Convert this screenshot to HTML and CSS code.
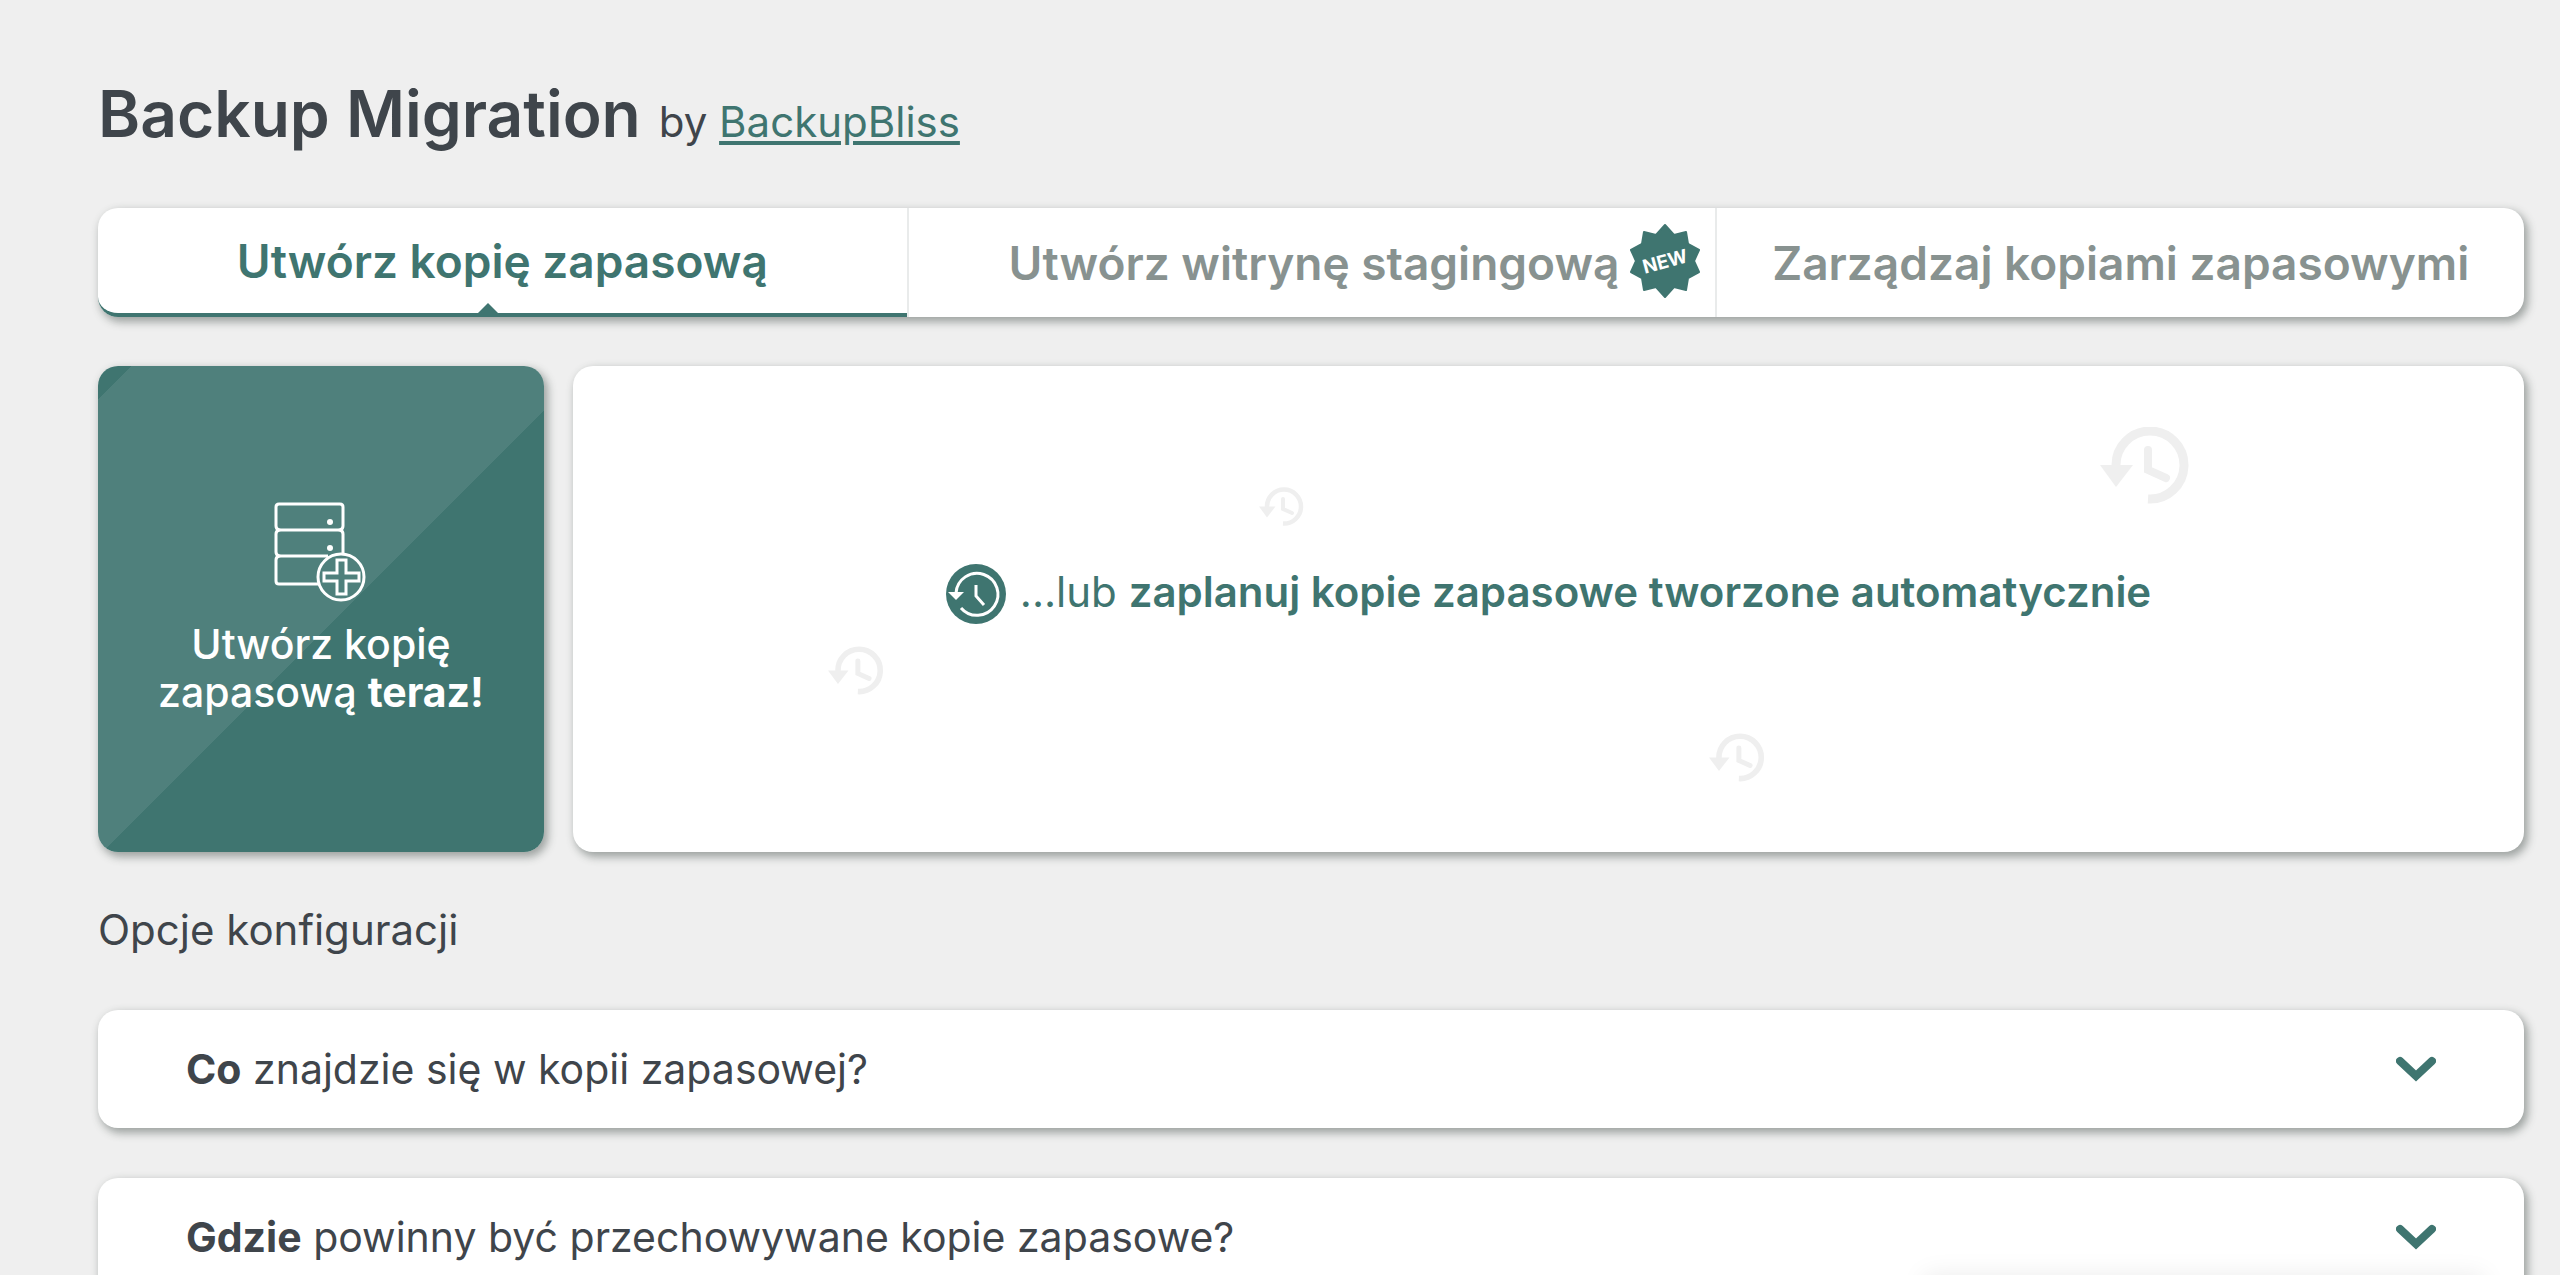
FILE: index.html
```html
<!DOCTYPE html>
<html lang="pl">
<head>
<meta charset="utf-8">
<meta name="viewport" content="width=device-width, initial-scale=1">
<title>Backup Migration</title>
<link rel="stylesheet" href="styles.css">
</head>
<body>
<svg class="sprite" aria-hidden="true">
  <symbol id="history" viewBox="0 0 90 78">
    <path d="M16 40V39A34 34 0 1 1 48 72" fill="none" stroke="currentColor" stroke-width="9"/>
    <path d="M0 38h33L16 60z" fill="currentColor"/>
    <path d="M48 23v20l18 8" fill="none" stroke="currentColor" stroke-width="8" stroke-linecap="round"/>
  </symbol>
  <symbol id="chevron" viewBox="0 0 40 28">
    <path d="M4 6l16 15L36 6" fill="none" stroke="currentColor" stroke-width="8" stroke-linecap="round"/>
  </symbol>
</svg>
<main class="page">
  <header class="header">
    <h1 class="title">Backup Migration</h1>
    <p class="byline">by <a href="#">BackupBliss</a></p>
  </header>

  <nav class="tabs card">
    <button class="tab tab-active" type="button">Utwórz kopię zapasową</button>
    <button class="tab tab-staging" type="button">Utwórz witrynę stagingową
      <svg class="badge" viewBox="0 0 72 74" aria-hidden="true">
        <path class="badge-shape" d="M36 1L45 11 57 8 59 20 70 26 65 37 70 48 59 54 57 66 45 63 36 73 27 63 15 66 13 54 2 48 7 37 2 26 13 20 15 8 27 11z"/>
        <text class="badge-text" x="36" y="44" text-anchor="middle" transform="rotate(-15 36 37)">NEW</text>
      </svg>
    </button>
    <button class="tab" type="button">Zarządzaj kopiami zapasowymi</button>
  </nav>

  <section class="actions">
    <button class="create card" type="button">
      <svg class="server" viewBox="0 0 94 102" fill="none" stroke="currentColor" stroke-width="3" aria-hidden="true">
        <path d="M69 51V32q0-3-3-4q3-1 3-4V5q0-3-3-3H5Q2 2 2 5v19q0 3 3 4q-3 1-3 4v18q0 3 3 4q-3 1-3 4v21q0 3 3 3h40"/>
        <path d="M5 28h61M5 54h49"/>
        <circle cx="56" cy="20" r="3" fill="currentColor" stroke="none"/>
        <circle cx="56" cy="46" r="3" fill="currentColor" stroke="none"/>
        <circle cx="67" cy="75" r="23"/>
        <path d="M63 58h9v13h13v8H72v13h-9V79H50v-8h13z"/>
      </svg>
      <span>Utwórz kopię<br>zapasową <b>teraz!</b></span>
    </button>
    <div class="schedule card">
      <svg class="deco deco-1" aria-hidden="true"><use href="#history"/></svg>
      <svg class="deco deco-2" aria-hidden="true"><use href="#history"/></svg>
      <svg class="deco deco-3" aria-hidden="true"><use href="#history"/></svg>
      <svg class="deco deco-4" aria-hidden="true"><use href="#history"/></svg>
      <button class="plan" type="button">
        <svg class="plan-icon" viewBox="0 0 60 60" fill="none" aria-hidden="true">
          <circle cx="30" cy="30" r="30" fill="currentColor"/>
          <path d="M10 29A21 21 0 1 1 15 44" stroke="#fff" stroke-width="3"/>
          <path d="M2 28h16l-8 8z" fill="#fff"/>
          <path d="M30 21v11l8 9" stroke="#fff" stroke-width="3"/>
        </svg>
        <span>...lub <b>zaplanuj kopie zapasowe tworzone automatycznie</b></span>
      </button>
    </div>
  </section>

  <h2 class="subtitle">Opcje konfiguracji</h2>
  <section class="options">
    <button class="option card" type="button">
      <span><b>Co</b> znajdzie się w kopii zapasowej?</span>
      <svg class="chevron" aria-hidden="true"><use href="#chevron"/></svg>
    </button>
    <button class="option card" type="button">
      <span><b>Gdzie</b> powinny być przechowywane kopie zapasowe?</span>
      <svg class="chevron" aria-hidden="true"><use href="#chevron"/></svg>
    </button>
  </section>
</main>
<aside class="drawer" aria-hidden="true"></aside>
</body>
</html>
```

FILE: styles.css
```css
:root {
  --green: #3f7570;
  --green-light: #4f807c;
  --ink: #3f454b;
  --muted: #889290;
}

* {
  box-sizing: border-box;
}

html {
  height: 100%;
  overflow: hidden;
}

body {
  margin: 0;
  height: 100%;
  overflow: hidden;
  background: #efefef;
  color: var(--ink);
  font-family: Inter, "Liberation Sans", sans-serif;
}

button {
  border: 0;
  padding: 0;
  background: none;
  color: inherit;
  font: inherit;
  cursor: pointer;
}

.sprite {
  display: none;
}

.page {
  padding: 78px 36px 0 98px;
}

.header {
  display: flex;
  align-items: baseline;
  gap: 18px;
  height: 130px;
}

.title {
  margin: 0;
  font-size: 64px;
  line-height: 72px;
  font-weight: 600;
}

.byline {
  margin: 0;
  font-size: 42px;
}

.byline a {
  color: var(--green);
  text-decoration-thickness: 4px;
  text-underline-offset: 4px;
}

.card {
  border-radius: 20px;
  background-color: #fff;
  box-shadow: 3px 4px 8px 1px rgb(60 70 67 / 45%);
}

.tabs {
  display: grid;
  grid-template-columns: repeat(3, 1fr);
  height: 109px;
}

.tab {
  position: relative;
  color: var(--muted);
  font-size: 46px;
  font-weight: 600;
  white-space: nowrap;
}

.tab + .tab {
  border-left: 2px solid #e9ebeb;
}

.tab-active {
  border-bottom: 4px solid var(--green);
  border-radius: 20px 0 0 20px;
  color: var(--green);
}

.tab-active::after {
  content: "";
  position: absolute;
  bottom: 0;
  left: 47%;
  border: 10px solid transparent;
  border-top: 0;
  border-bottom-color: var(--green);
}

.tab-staging {
  display: flex;
  align-items: center;
  justify-content: flex-end;
  gap: 10px;
  padding-right: 14px;
}

.badge {
  width: 72px;
  height: 74px;
  margin-bottom: 4px;
}

.badge-shape {
  fill: var(--green);
  stroke: var(--green);
  stroke-width: 2px;
  stroke-linejoin: round;
}

.badge-text {
  fill: #fff;
  font-size: 19px;
  font-weight: 700;
}

.actions {
  display: grid;
  grid-template-columns: 446px 1fr;
  gap: 29px;
  height: 486px;
  margin-top: 49px;
}

.create {
  display: flex;
  flex-direction: column;
  align-items: center;
  justify-content: center;
  gap: 16px;
  background: linear-gradient(135deg, var(--green) 24px, var(--green-light) 24px, var(--green-light) 347px, var(--green) 347px);
  color: #fff;
  font-size: 41px;
  line-height: 48px;
  font-weight: 500;
}

.server {
  width: 94px;
  height: 102px;
}

.schedule {
  position: relative;
  display: flex;
  align-items: center;
  justify-content: center;
}

.plan {
  display: flex;
  align-items: center;
  gap: 14px;
  margin-bottom: 30px;
  color: var(--green);
  font-size: 42px;
  line-height: 48px;
  white-space: nowrap;
}

.plan span {
  padding-bottom: 4px;
}

.plan b {
  font-weight: 600;
}

.plan-icon {
  width: 60px;
  height: 60px;
}

.deco {
  position: absolute;
  color: #efefef;
}

.deco-1 { top: 121px; right: 1220px; width: 45px; height: 40px; }
.deco-2 { top: 61px; right: 334px; width: 90px; height: 78px; }
.deco-3 { top: 280px; right: 1640px; width: 56px; height: 50px; }
.deco-4 { top: 367px; right: 759px; width: 56px; height: 50px; }

.subtitle {
  margin: 46px 0 48px;
  font-size: 42px;
  line-height: 64px;
  font-weight: 400;
}

.options {
  display: grid;
  gap: 50px;
}

.option {
  display: flex;
  align-items: center;
  justify-content: space-between;
  height: 118px;
  padding: 0 88px;
  font-size: 41px;
}

.chevron {
  width: 40px;
  height: 28px;
  color: var(--green);
}

.drawer {
  position: fixed;
  right: 76px;
  top: 100%;
  width: 560px;
  height: 100px;
  box-shadow: 0 0 24px 0 rgb(0 0 0 / 8%);
}
```
